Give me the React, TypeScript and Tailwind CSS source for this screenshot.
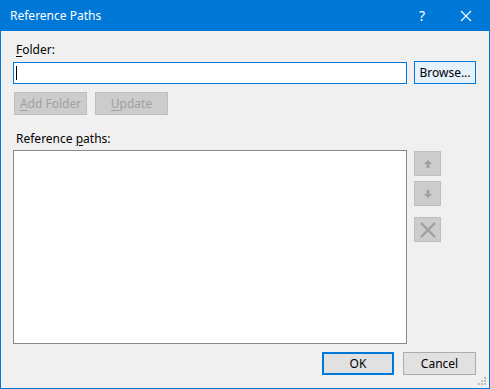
import React from "react";

const font = { fontFamily: '"Segoe UI", "Noto Sans", "Liberation Sans", sans-serif' };

function Btn({ children, className = "" }: { children: React.ReactNode; className?: string }) {
  return (
    <div className={`flex items-center justify-center text-[12px] leading-none ${className}`}>{children}</div>
  );
}

export default function App() {
  return (
    <div
      className="relative w-[490px] h-[389px] border border-[#0078d7] bg-[#f0f0f0] flex flex-col text-[#000] overflow-hidden"
      style={font}
    >
      {/* Title bar */}
      <div className="h-[30px] bg-[#0078d7] flex items-center text-white shrink-0 relative">
        <span className="ml-[9px] text-[12px] mt-[-1px]">Reference Paths</span>
        <div className="ml-auto flex items-center">
          <span className="text-[14px] mr-[35px] mt-[-1px]">?</span>
          <svg width="12" height="12" viewBox="0 0 12 12" className="mr-[17px]">
            <path d="M1 1 L11 11 M11 1 L1 11" stroke="white" strokeWidth="1.1" />
          </svg>
        </div>
      </div>

      {/* Body */}
      <div className="flex flex-col pl-[12px] pr-[13px]">
        <div className="mt-[11px] h-[16px] pl-[3px] text-[12px] leading-[16px]">
          <span className="underline underline-offset-2">F</span>older:
        </div>

        <div className="mt-[3px] flex items-start">
          <div className="mt-[1px] w-[394px] h-[22px] border border-[#0078d7] bg-white flex items-center">
            <div className="ml-[2px] w-[1px] h-[14px] bg-black" />
          </div>
          <Btn className="ml-[7px] w-[62px] h-[23px] border border-[#0078d7] bg-[#e5f1fb]">Browse...</Btn>
        </div>

        <div className="mt-[8px] flex items-start pl-[1px]">
          <Btn className="w-[73px] h-[23px] border border-[#bfbfbf] bg-[#cccccc] text-[#a0a0a0]">
            <span>
              <span className="underline underline-offset-2">A</span>dd Folder
            </span>
          </Btn>
          <Btn className="ml-[8px] w-[73px] h-[23px] border border-[#bfbfbf] bg-[#cccccc] text-[#a0a0a0]">
            <span>
              <span className="underline underline-offset-2">U</span>pdate
            </span>
          </Btn>
        </div>

        <div className="mt-[16px] h-[16px] pl-[3px] text-[12px] leading-[16px]">
          Reference <span className="underline underline-offset-2">p</span>aths:
        </div>

        <div className="mt-[3px] flex items-start">
          <div className="w-[394px] h-[194px] border border-[#828790] bg-white" />
          <div className="ml-[7px] flex flex-col">
            <div className="mt-[1px] w-[27px] h-[25px] border border-[#bfbfbf] bg-[#cccccc] flex items-center justify-center">
              <svg width="10" height="10" viewBox="0 0 10 10">
                <path d="M5 1 L9 5 L6.5 5 L6.5 9 L3.5 9 L3.5 5 L1 5 Z" fill="#a0a0a0" />
              </svg>
            </div>
            <div className="mt-[5px] w-[27px] h-[25px] border border-[#bfbfbf] bg-[#cccccc] flex items-center justify-center">
              <svg width="10" height="10" viewBox="0 0 10 10">
                <path d="M5 9 L9 5 L6.5 5 L6.5 1 L3.5 1 L3.5 5 L1 5 Z" fill="#a0a0a0" />
              </svg>
            </div>
            <div className="mt-[11px] w-[27px] h-[25px] border border-[#bfbfbf] bg-[#cccccc] flex items-center justify-center">
              <svg width="18" height="18" viewBox="0 0 18 18">
                <path d="M2 2 L16 16 M16 2 L2 16" stroke="#a0a0a0" strokeWidth="2.4" />
              </svg>
            </div>
          </div>
        </div>

        <div className="mt-[8px] flex justify-end">
          <Btn className="w-[72px] h-[23px] border-2 border-[#0078d7] bg-[#e1e1e1]">OK</Btn>
          <Btn className="ml-[9px] w-[73px] h-[23px] border border-[#adadad] bg-[#e1e1e1]">Cancel</Btn>
        </div>
      </div>

      {/* size grip */}
      <svg width="12" height="12" viewBox="0 0 12 12" className="absolute right-[1px] bottom-[1px]">
        <rect x="8" y="2" width="2" height="2" fill="#bcbcbc" />
        <rect x="5" y="5" width="2" height="2" fill="#bcbcbc" />
        <rect x="8" y="5" width="2" height="2" fill="#bcbcbc" />
        <rect x="2" y="8" width="2" height="2" fill="#bcbcbc" />
        <rect x="5" y="8" width="2" height="2" fill="#bcbcbc" />
        <rect x="8" y="8" width="2" height="2" fill="#bcbcbc" />
      </svg>
    </div>
  );
}
